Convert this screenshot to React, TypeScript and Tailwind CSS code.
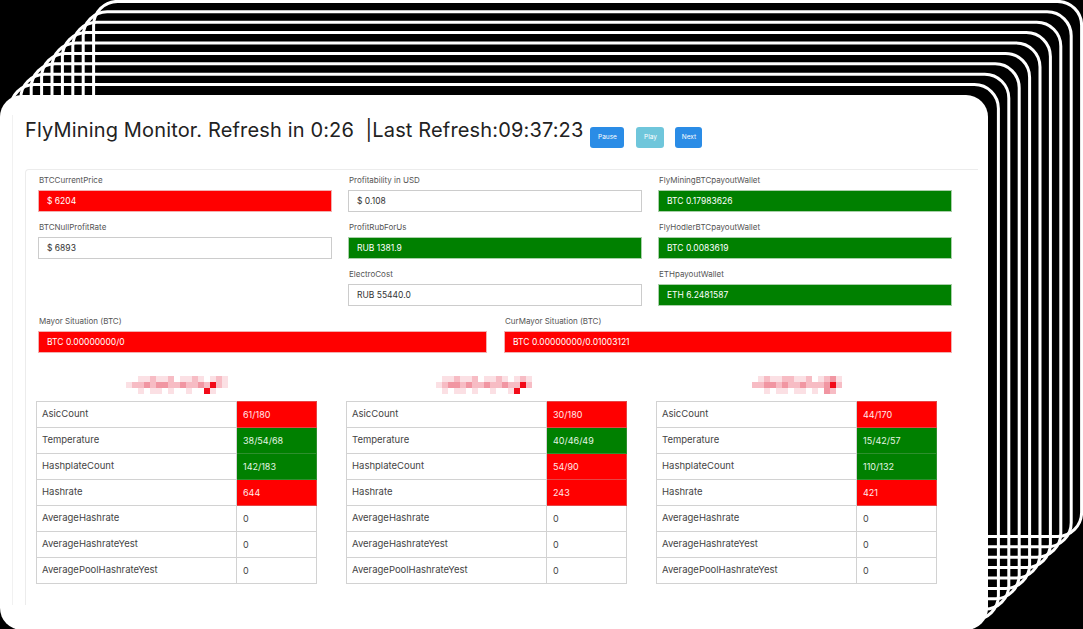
import React from "react";

type Tone = "red" | "green" | "plain";

const topFields: ({ label: string; value: string; tone: Tone } | null)[] = [
  { label: "BTCCurrentPrice", value: "$ 6204", tone: "red" },
  { label: "Profitability in USD", value: "$ 0.108", tone: "plain" },
  { label: "FlyMiningBTCpayoutWallet", value: "BTC 0.17983626", tone: "green" },
  { label: "BTCNullProfitRate", value: "$ 6893", tone: "plain" },
  { label: "ProfitRubForUs", value: "RUB 1381.9", tone: "green" },
  { label: "FlyHodlerBTCpayoutWallet", value: "BTC 0.0083619", tone: "green" },
  null,
  { label: "ElectroCost", value: "RUB 55440.0", tone: "plain" },
  { label: "ETHpayoutWallet", value: "ETH 6.2481587", tone: "green" },
];

const rigs: { rows: [string, string, Tone][]; mosaic: string[] }[] = [
  {
    rows: [
      ["AsicCount", "61/180", "red"],
      ["Temperature", "38/54/68", "green"],
      ["HashplateCount", "142/183", "green"],
      ["Hashrate", "644", "red"],
      ["AverageHashrate", "0", "plain"],
      ["AverageHashrateYest", "0", "plain"],
      ["AveragePoolHashrateYest", "0", "plain"],
    ],
    mosaic: ["..aabaab.aaba.aba", "abbcbccbbcbbcbrba", "..a.aa.a..a..ra.."],
  },
  {
    rows: [
      ["AsicCount", "30/180", "red"],
      ["Temperature", "40/46/49", "green"],
      ["HashplateCount", "54/90", "red"],
      ["Hashrate", "243", "red"],
      ["AverageHashrate", "0", "plain"],
      ["AverageHashrateYest", "0", "plain"],
      ["AveragePoolHashrateYest", "0", "plain"],
    ],
    mosaic: [".aabaab.aaba.aba.", "abccbcbbcbbcbbrb.", ".a.aa.a..a..ar..."],
  },
  {
    rows: [
      ["AsicCount", "44/170", "red"],
      ["Temperature", "15/42/57", "green"],
      ["HashplateCount", "110/132", "green"],
      ["Hashrate", "421", "red"],
      ["AverageHashrate", "0", "plain"],
      ["AverageHashrateYest", "0", "plain"],
      ["AveragePoolHashrateYest", "0", "plain"],
    ],
    mosaic: ["..abaabbaab.abca.", ".bbccbcbbcbbbcrb.", "...a.aa.aa.a.cb.."],
  },
];

const cellColor: Record<string, string> = {
  ".": "bg-transparent",
  a: "bg-[#fbe0e4]",
  b: "bg-[#f7bcc4]",
  c: "bg-[#f196a2]",
  r: "bg-[#f20a18]",
};

function toneBox(tone: Tone) {
  if (tone === "red") return "bg-[#ff0000] text-white border-[#f2b0b0]";
  if (tone === "green") return "bg-[#008000] text-white border-[#a9cfa9]";
  return "bg-white text-[#333] border-[#cccccc]";
}

function Field({ label, value, tone }: { label: string; value: string; tone: Tone }) {
  return (
    <div>
      <div className="h-[12px] pl-[1px] text-[8px] leading-[12px] text-[#555]">{label}</div>
      <div
        className={`mt-[4px] h-[22px] border px-[8px] text-[8.5px] leading-[20px] ${toneBox(tone)}`}
      >
        {value}
      </div>
    </div>
  );
}

function Mosaic({ rows }: { rows: string[] }) {
  return (
    <div className="flex flex-col">
      {rows.map((r, i) => (
        <div key={i} className="flex">
          {r.split("").map((c, j) => (
            <div key={j} className={`h-[6px] w-[6px] ${cellColor[c]}`} />
          ))}
        </div>
      ))}
    </div>
  );
}

function RigTable({ rows }: { rows: [string, string, Tone][] }) {
  return (
    <table className="w-[281px] border-collapse">
      <tbody>
        {rows.map(([k, v, tone]) => (
          <tr key={k} className="h-[26px]">
            <td className="w-[200px] border border-[#d2d2d2] pl-[5px] text-[9.5px] text-[#444]">
              {k}
            </td>
            <td
              className={`border pl-[6px] text-[9px] ${
                tone === "red"
                  ? "border-[#e64545] bg-[#ff0000] text-[#ffe9e9]"
                  : tone === "green"
                    ? "border-[#2d8f2d] bg-[#008000] text-[#e6f5e6]"
                    : "border-[#d2d2d2] text-[#444]"
              }`}
            >
              {v}
            </td>
          </tr>
        ))}
      </tbody>
    </table>
  );
}

function Backdrop() {
  const layers = [9, 8, 7, 6, 5, 4, 3, 2, 1];
  return (
    <svg className="absolute inset-0" width={1083} height={629}>
      {layers.map((i) => (
        <rect
          key={i}
          x={10.4 * i}
          y={95 - 10.4 * i}
          width={988}
          height={535}
          rx={24}
          fill="none"
          stroke="white"
          strokeWidth={3}
        />
      ))}
    </svg>
  );
}

export default function App() {
  return (
    <div className="relative h-[629px] w-[1083px] overflow-hidden bg-black font-['Inter',sans-serif]">
      <Backdrop />
      <div className="relative mt-[95px] h-[535px] w-[988px] rounded-[22px] bg-white">
        <div className="ml-[12px] h-[510px] pt-[20px]">
          <div className="h-full border-l border-[#f1f1f1] pl-[12px]">
            <div className="flex items-start">
              <h1 className="pt-[1px] text-[20px] leading-[28px] font-normal tracking-[0.15px] text-[#222]">
                FlyMining Monitor. Refresh in 0:26 &nbsp;|Last Refresh:09:37:23
              </h1>
              <div className="mt-[12px] ml-[7px] flex">
                <button className="h-[21px] w-[34px] rounded-[3px] bg-[#2a8ce6] text-[6.5px] text-white">
                  Pause
                </button>
                <button className="ml-[12px] h-[21px] w-[28px] rounded-[3px] bg-[#6fc6db] text-[6.5px] text-white">
                  Play
                </button>
                <button className="ml-[11px] h-[21px] w-[27px] rounded-[3px] bg-[#2a8ce6] text-[6.5px] text-white">
                  Next
                </button>
              </div>
            </div>

            <div className="mt-[21px] h-[436px] w-[953px] rounded-tl-[4px] border-t border-l border-[#ececec] pt-[4px] pl-[12px]">
              <div className="grid grid-cols-[294px_294px_294px] gap-x-[16px] gap-y-[9px]">
                {topFields.map((f, i) =>
                  f ? <Field key={i} {...f} /> : <div key={i} />,
                )}
              </div>
              <div className="mt-[9px] grid grid-cols-[449px_448px] gap-x-[17px]">
                <Field label="Mayor Situation (BTC)" value="BTC 0.00000000/0" tone="red" />
                <Field
                  label="CurMayor Situation (BTC)"
                  value="BTC 0.00000000/0.01003121"
                  tone="red"
                />
              </div>

              <div className="mt-[23px] -ml-[2px] grid grid-cols-[281px_281px_281px] gap-x-[29px]">
                {rigs.map((r, i) => (
                  <div key={i}>
                    <div className="flex h-[18px] justify-center">
                      <Mosaic rows={r.mosaic} />
                    </div>
                    <div className="mt-[7px]">
                      <RigTable rows={r.rows} />
                    </div>
                  </div>
                ))}
              </div>
            </div>
          </div>
        </div>
      </div>
    </div>
  );
}
